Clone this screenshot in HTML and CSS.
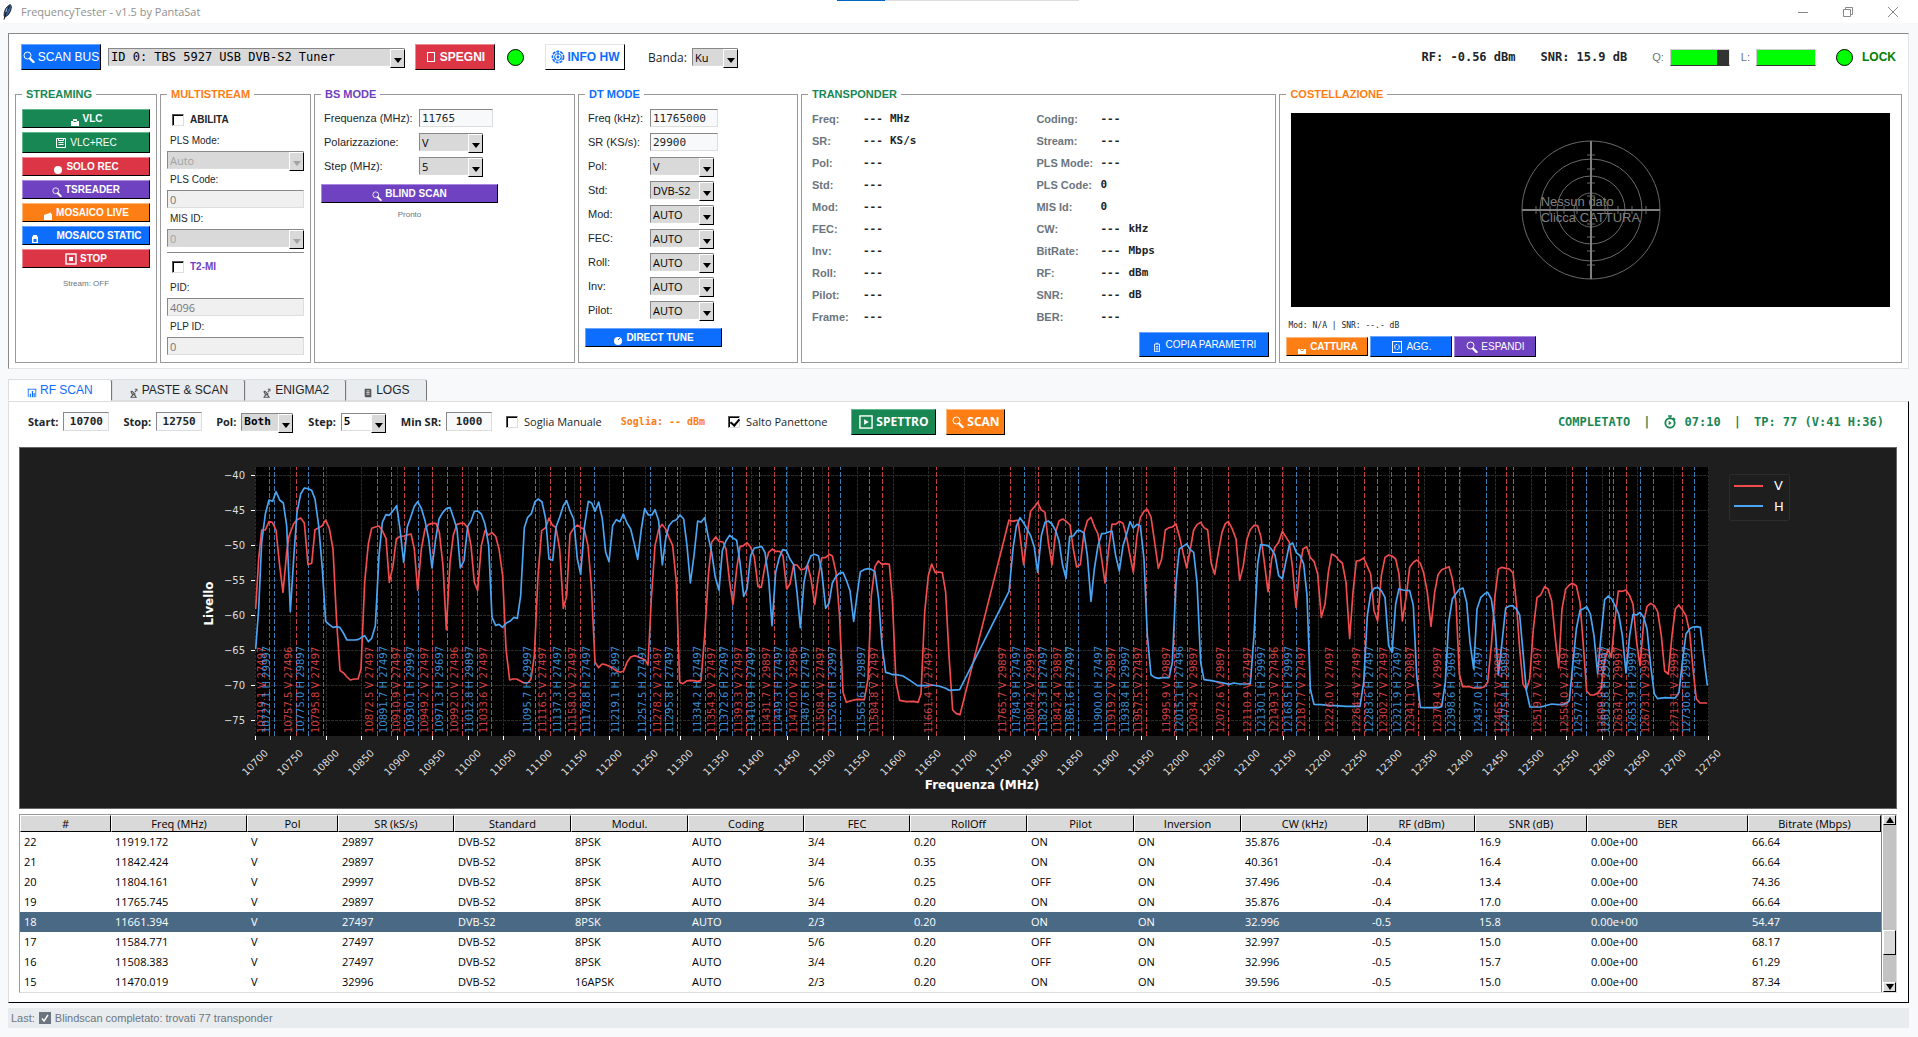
FILE: index.html
```html
<!DOCTYPE html>
<html lang="it">
<head>
    <meta charset="UTF-8">
    <title>FrequencyTester - v1.5 by PantaSat</title>
    <link rel="stylesheet" href="styles.css">
</head>
<body>
    <svg class="sprite" aria-hidden="true">
        <symbol id="i-search" viewBox="0 0 12 12">
            <circle cx="4.5" cy="4.5" r="3.5" fill="none" stroke="currentColor"/>
            <path d="M7 7.5l3.5 3.5" stroke="currentColor" stroke-width="2.4" stroke-linecap="round"/>
        </symbol>
        <symbol id="i-tofu" viewBox="0 0 12 12">
            <rect x="2.5" y="1.5" width="7" height="9" fill="none" stroke="currentColor"/>
        </symbol>
        <symbol id="i-chip" viewBox="0 0 14 14">
            <circle cx="7" cy="7" r="5.6" fill="none" stroke="currentColor" stroke-width="1.6" stroke-dasharray="3 1"/>
            <circle cx="7" cy="7" r="3.4" fill="none" stroke="currentColor"/>
            <path d="M7 2v3M2.5 9.5L5 8M11.5 9.5L9 8" stroke="currentColor"/>
            <circle cx="7" cy="7" r="1.4" fill="currentColor"/>
        </symbol>
        <symbol id="i-cast" viewBox="0 0 10 10">
            <path d="M3 3h4v2h2v5H1V5h2z" fill="currentColor"/>
            <path d="M3.5 5.5h3" stroke="#198754"/>
        </symbol>
        <symbol id="i-floppy" viewBox="0 0 12 12">
            <path d="M1.5 1.5h9v9h-9zM3.5 1.5v2h5v-2M3.5 5.5h5M3.5 7.5h5" fill="none" stroke="currentColor"/>
        </symbol>
        <symbol id="i-rec" viewBox="0 0 10 10"><circle cx="5" cy="6" r="4" fill="currentColor"/></symbol>
        <symbol id="i-clap" viewBox="0 0 10 10"><path d="M1 5l7-2.5V4h1v6H1z" fill="currentColor"/></symbol>
        <symbol id="i-cam" viewBox="0 0 10 10">
            <path d="M3 2h4v1.5h1V10H2V3.5h1z" fill="currentColor"/>
            <rect x="3.5" y="6" width="3" height="3" fill="#0d6efd"/>
        </symbol>
        <symbol id="i-stop" viewBox="0 0 12 12">
            <rect x="1" y="1" width="10" height="10" fill="none" stroke="currentColor" stroke-width="1.4"/>
            <rect x="4" y="4" width="4" height="4" fill="currentColor"/>
        </symbol>
        <symbol id="i-play" viewBox="0 0 15 15">
            <rect x="1" y="1" width="13" height="13" fill="none" stroke="currentColor" stroke-width="1.5"/>
            <path d="M5.5 4.5v6l5-3z" fill="currentColor"/>
        </symbol>
        <symbol id="i-tune" viewBox="0 0 10 10">
            <circle cx="5" cy="6" r="4" fill="currentColor"/>
            <path d="M5 5l2-2" stroke="#0d6efd"/>
        </symbol>
        <symbol id="i-doc" viewBox="0 0 10 12">
            <path d="M2 2.5h6v9H2zM3.5 1.5h3M3.5 5.5h3M3.5 7.5h3M3.5 9.5h3" fill="none" stroke="currentColor"/>
        </symbol>
        <symbol id="i-photo" viewBox="0 0 10 10">
            <path d="M1 5h8v5H1z" fill="currentColor"/><path d="M3 5.5q2 2.5 4 0" fill="none" stroke="#fd7e14"/>
        </symbol>
        <symbol id="i-refresh" viewBox="0 0 12 12">
            <rect x="1.5" y=".5" width="9" height="11" fill="none" stroke="currentColor"/>
            <path d="M5 8.5a3 3 0 0 1 0-5h1M7 3.5a3 3 0 0 1 0 5H6" fill="none" stroke="currentColor"/>
        </symbol>
        <symbol id="i-bars" viewBox="0 0 12 12">
            <path d="M1 1.5h10M1.5 1v10M10.5 1v10" stroke="currentColor"/>
            <path d="M4 11V7M6.5 11V3.5M8.5 11V6" stroke="currentColor" stroke-width="1.4"/>
        </symbol>
        <symbol id="i-dish" viewBox="0 0 12 12">
            <path d="M2.5 3.5q0 4.5 5 4.5M3 3.5l4.5 4M4.5 8l-2 3h6l-2-3" fill="none" stroke="currentColor" stroke-width="1.3"/>
            <path d="M7 5l1.5-2M7 1.5h2.500V4" fill="none" stroke="currentColor" stroke-width="1.3"/>
        </symbol>
        <symbol id="i-log" viewBox="0 0 12 12">
            <path d="M2 1h7l1 1v9H3l-1-1z" fill="currentColor"/>
            <path d="M4 3.5h4M4 5.5h4M4 7.5h4" stroke="#e9ecef"/>
        </symbol>
        <symbol id="i-timer" viewBox="0 0 15 15">
            <circle cx="7.5" cy="8.5" r="5" fill="none" stroke="currentColor" stroke-width="2"/>
            <path d="M5.5 1h4M7.5 1v2.5M11 3l2 2M6 7l2 1.5L6 10" fill="none" stroke="currentColor" stroke-width="1.5"/>
        </symbol>
        <symbol id="i-check" viewBox="0 0 12 12">
            <rect width="12" height="12" fill="currentColor"/>
            <path d="M3 6.5L5 9l4-6" fill="none" stroke="#fff" stroke-width="1.4"/>
        </symbol>
    </svg>

    <header class="titlebar">
        <svg class="feather" viewBox="0 0 10 16" aria-hidden="true">
            <path d="M2 11.5Q2 4 8 .5q2.5 1 .5 6.5Q7 11.5 3 13z" fill="#3c5f9c" stroke="#111" stroke-width=".8"/>
            <path d="M7.5 2Q4 7 2 15.5" fill="none" stroke="#111"/>
            <path d="M5 4.5L4 8" stroke="#9fc3f0"/>
        </svg>
        <span class="title">FrequencyTester - v1.5 by PantaSat</span>
        <span class="progress"></span>
        <div class="window-buttons">
            <button type="button" aria-label="Riduci"><svg viewBox="0 0 10 10"><path d="M0 5.5h10"/></svg></button>
            <button type="button" aria-label="Ripristina"><svg viewBox="0 0 10 10"><path d="M.5 2.5h7v7h-7zM2.5 2.5v-2h7v7h-2"/></svg></button>
            <button type="button" aria-label="Chiudi"><svg viewBox="0 0 10 10"><path d="M0 0l10 10M10 0L0 10"/></svg></button>
        </div>
    </header>

    <section class="tuner">
        <div class="device-bar">
            <button type="button" class="btn big blue"><svg class="ico"><use href="#i-search"/></svg>SCAN BUS</button>
            <span class="combo device"><select aria-label="Dispositivo"><option>ID 0: TBS 5927 USB DVB-S2 Tuner</option></select></span>
            <button type="button" class="btn big red bold"><svg class="ico"><use href="#i-tofu"/></svg>SPEGNI</button>
            <span class="led"></span>
            <button type="button" class="btn big white bold"><svg class="ico mid"><use href="#i-chip"/></svg>INFO HW</button>
            <label class="band" for="banda">Banda:</label>
            <span class="combo w46"><select id="banda"><option>Ku</option></select></span>
            <div class="signal">
                <span class="reading">RF: -0.56 dBm</span>
                <span class="reading">SNR: 15.9 dB</span>
                <span class="meter-label">Q:</span><span class="meter"><i style="width: 80%"></i></span>
                <span class="meter-label">L:</span><span class="meter"><i style="width: 100%"></i></span>
                <span class="led"></span>
                <span class="lock">LOCK</span>
            </div>
        </div>

        <div class="panels">
            <fieldset class="panel streaming">
                <legend class="c-green">STREAMING</legend>
                <button type="button" class="btn green bold"><svg class="ico low"><use href="#i-cast"/></svg>VLC</button>
                <button type="button" class="btn green tall"><svg class="ico"><use href="#i-floppy"/></svg>VLC+REC</button>
                <button type="button" class="btn red bold"><svg class="ico low"><use href="#i-rec"/></svg>SOLO REC</button>
                <button type="button" class="btn purple bold"><svg class="ico low"><use href="#i-search"/></svg>TSREADER</button>
                <button type="button" class="btn orange bold"><svg class="ico low"><use href="#i-clap"/></svg>MOSAICO LIVE</button>
                <button type="button" class="btn blue bold spaced"><svg class="ico low"><use href="#i-cam"/></svg>MOSAICO STATIC</button>
                <button type="button" class="btn red bold"><svg class="ico"><use href="#i-stop"/></svg>STOP</button>
                <p class="note">Stream: OFF</p>
            </fieldset>

            <fieldset class="panel multistream">
                <legend class="c-orange">MULTISTREAM</legend>
                <label class="check small"><input type="checkbox">ABILITA</label>
                <label class="field-label" for="pls-mode">PLS Mode:</label>
                <span class="combo off"><select id="pls-mode" disabled><option>Auto</option></select></span>
                <label class="field-label" for="pls-code">PLS Code:</label>
                <input class="entry" id="pls-code" type="text" value="0" disabled>
                <label class="field-label" for="mis-id">MIS ID:</label>
                <span class="combo off"><select id="mis-id" disabled><option>0</option></select></span>
                <hr>
                <label class="check small c-purple"><input type="checkbox">T2-MI</label>
                <label class="field-label" for="pid">PID:</label>
                <input class="entry" id="pid" type="text" value="4096" disabled>
                <label class="field-label" for="plp-id">PLP ID:</label>
                <input class="entry" id="plp-id" type="text" value="0" disabled>
            </fieldset>

            <fieldset class="panel bs">
                <legend class="c-purple">BS MODE</legend>
                <div class="form">
                    <label for="bs-freq">Frequenza (MHz):</label>
                    <input class="entry mono" id="bs-freq" type="text" value="11765">
                    <label for="bs-pol">Polarizzazione:</label>
                    <span class="combo w64"><select id="bs-pol"><option>V</option></select></span>
                    <label for="bs-step">Step (MHz):</label>
                    <span class="combo w64"><select id="bs-step"><option>5</option></select></span>
                </div>
                <button type="button" class="btn purple bold"><svg class="ico low"><use href="#i-search"/></svg>BLIND SCAN</button>
                <p class="note">Pronto</p>
            </fieldset>

            <fieldset class="panel dt">
                <legend class="c-blue">DT MODE</legend>
                <div class="form">
                    <label for="dt-freq">Freq (kHz):</label>
                    <input class="entry mono" id="dt-freq" type="text" value="11765000">
                    <label for="dt-sr">SR (KS/s):</label>
                    <input class="entry mono" id="dt-sr" type="text" value="29900">
                    <label for="dt-pol">Pol:</label>
                    <span class="combo w64"><select id="dt-pol"><option>V</option></select></span>
                    <label for="dt-std">Std:</label>
                    <span class="combo w64"><select id="dt-std"><option>DVB-S2</option></select></span>
                    <label for="dt-mod">Mod:</label>
                    <span class="combo w64"><select id="dt-mod"><option>AUTO</option></select></span>
                    <label for="dt-fec">FEC:</label>
                    <span class="combo w64"><select id="dt-fec"><option>AUTO</option></select></span>
                    <label for="dt-roll">Roll:</label>
                    <span class="combo w64"><select id="dt-roll"><option>AUTO</option></select></span>
                    <label for="dt-inv">Inv:</label>
                    <span class="combo w64"><select id="dt-inv"><option>AUTO</option></select></span>
                    <label for="dt-pilot">Pilot:</label>
                    <span class="combo w64"><select id="dt-pilot"><option>AUTO</option></select></span>
                </div>
                <button type="button" class="btn blue bold"><svg class="ico low"><use href="#i-tune"/></svg>DIRECT TUNE</button>
            </fieldset>

            <fieldset class="panel transponder">
                <legend class="c-green">TRANSPONDER</legend>
                <div class="params">
                    <dl class="left">
                        <dt>Freq:</dt><dd>---</dd><dd>MHz</dd>
                        <dt>SR:</dt><dd>---</dd><dd>KS/s</dd>
                        <dt>Pol:</dt><dd>---</dd><dd></dd>
                        <dt>Std:</dt><dd>---</dd><dd></dd>
                        <dt>Mod:</dt><dd>---</dd><dd></dd>
                        <dt>FEC:</dt><dd>---</dd><dd></dd>
                        <dt>Inv:</dt><dd>---</dd><dd></dd>
                        <dt>Roll:</dt><dd>---</dd><dd></dd>
                        <dt>Pilot:</dt><dd>---</dd><dd></dd>
                        <dt>Frame:</dt><dd>---</dd><dd></dd>
                    </dl>
                    <dl class="right">
                        <dt>Coding:</dt><dd>---</dd><dd></dd>
                        <dt>Stream:</dt><dd>---</dd><dd></dd>
                        <dt>PLS Mode:</dt><dd>---</dd><dd></dd>
                        <dt>PLS Code:</dt><dd>0</dd><dd></dd>
                        <dt>MIS Id:</dt><dd>0</dd><dd></dd>
                        <dt>CW:</dt><dd>---</dd><dd>kHz</dd>
                        <dt>BitRate:</dt><dd>---</dd><dd>Mbps</dd>
                        <dt>RF:</dt><dd>---</dd><dd>dBm</dd>
                        <dt>SNR:</dt><dd>---</dd><dd>dB</dd>
                        <dt>BER:</dt><dd>---</dd><dd></dd>
                    </dl>
                </div>
                <button type="button" class="btn blue copy"><svg class="ico low"><use href="#i-doc"/></svg>COPIA PARAMETRI</button>
            </fieldset>

            <fieldset class="panel constellation">
                <legend class="c-orange">COSTELLAZIONE</legend>
                <div class="scope">
                    <svg viewBox="0 0 140 140" aria-hidden="true">
                        <g fill="none" stroke="#6a6a6a">
                            <circle cx="70" cy="70" r="69"/>
                            <circle cx="70" cy="70" r="51"/>
                            <circle cx="70" cy="70" r="34"/>
                            <circle cx="70" cy="70" r="17"/>
                            <path d="M66 15h8M66 29h8M66 43h8M66 56h8M66 84h8M66 97h8M66 111h8M66 125h8"/>
                            <path d="M15 66v8M29 66v8M43 66v8M56 66v8M84 66v8M97 66v8M111 66v8M125 66v8"/>
                        </g>
                        <path d="M70 1v138M1 70h138" stroke="#808080" stroke-width="2"/>
                    </svg>
                    <p>Nessun dato<br>Clicca CATTURA</p>
                </div>
                <p class="mod">Mod: N/A | SNR: --.- dB</p>
                <div class="actions">
                    <button type="button" class="btn orange bold"><svg class="ico low"><use href="#i-photo"/></svg>CATTURA</button>
                    <button type="button" class="btn blue tall"><svg class="ico"><use href="#i-refresh"/></svg>AGG.</button>
                    <button type="button" class="btn purple tall"><svg class="ico"><use href="#i-search"/></svg>ESPANDI</button>
                </div>
            </fieldset>
        </div>
    </section>

    <nav class="tabs">
        <button type="button" class="tab active"><svg class="ico low"><use href="#i-bars"/></svg>RF SCAN</button>
        <button type="button" class="tab"><svg class="ico low"><use href="#i-dish"/></svg>PASTE &amp; SCAN</button>
        <button type="button" class="tab"><svg class="ico low"><use href="#i-dish"/></svg>ENIGMA2</button>
        <button type="button" class="tab"><svg class="ico low"><use href="#i-log"/></svg>LOGS</button>
    </nav>

    <main class="pane">
        <div class="scan-bar">
            <label for="start">Start:</label>
            <input class="entry mono" id="start" type="text" value="10700">
            <label for="stop">Stop:</label>
            <input class="entry mono" id="stop" type="text" value="12750">
            <label for="pol">Pol:</label>
            <span class="combo w52"><select id="pol"><option>Both</option></select></span>
            <label for="step">Step:</label>
            <span class="combo light w45"><select id="step"><option>5</option></select></span>
            <label for="min-sr">Min SR:</label>
            <input class="entry mono" id="min-sr" type="text" value="1000">
            <label class="check"><input type="checkbox">Soglia Manuale</label>
            <span class="threshold">Soglia: -- dBm</span>
            <label class="check skip"><input type="checkbox" checked>Salto Panettone</label>
            <button type="button" class="btn big green bold spectrum"><svg class="ico mid"><use href="#i-play"/></svg>SPETTRO</button>
            <button type="button" class="btn big orange bold scan"><svg class="ico"><use href="#i-search"/></svg>SCAN</button>
            <p class="status">
                <span>COMPLETATO</span><span>|</span>
                <span><svg class="ico mid"><use href="#i-timer"/></svg> 07:10</span><span>|</span>
                <span>TP: 77 (V:41 H:36)</span>
            </p>
        </div>

        <div class="figure">
            <svg id="chart" viewBox="0 0 1876 360" role="img" aria-label="Spettro"></svg>
        </div>

        <div class="results">
            <table>
                <thead>
                    <tr>
                        <th>#</th><th>Freq (MHz)</th><th>Pol</th><th>SR (kS/s)</th>
                        <th>Standard</th><th>Modul.</th><th>Coding</th><th>FEC</th>
                        <th>RollOff</th><th>Pilot</th><th>Inversion</th><th>CW (kHz)</th>
                        <th>RF (dBm)</th><th>SNR (dB)</th><th>BER</th><th>Bitrate (Mbps)</th>
                    </tr>
                </thead>
                <tbody id="rows"></tbody>
            </table>
            <div class="scrollbar">
                <button type="button" aria-label="Su"><svg viewBox="0 0 8 6"><path d="M4 0l4 6H0z"/></svg></button>
                <div class="track"><i class="thumb"></i></div>
                <button type="button" aria-label="Giù"><svg viewBox="0 0 8 6"><path d="M4 6l4-6H0z"/></svg></button>
            </div>
        </div>
    </main>

    <footer class="statusbar">Last: <svg class="ico"><use href="#i-check"/></svg> Blindscan completato: trovati 77 transponder</footer>

    <script src="script.js"></script>
</body>
</html>
```

FILE: styles.css
```css
* {
    box-sizing: border-box;
}

body {
    margin: 0;
    padding: 0 9px 0 8px;
    background: #f8f9fa;
    color: #212529;
    font-family: "Liberation Sans", Arial, sans-serif;
    font-size: 11px;
}

p, dl, dd {
    margin: 0;
}

button, input, select {
    font: inherit;
    color: inherit;
    border-radius: 0;
}

.sprite {
    position: absolute;
    width: 0;
    height: 0;
}

.ico {
    width: 12px;
    height: 12px;
    flex: none;
}

.ico.mid {
    width: 14px;
    height: 14px;
}

.ico.low {
    width: 10px;
    height: 10px;
    margin-top: 5px;
}

.c-green { color: #198754; }
.c-orange { color: #fd7e14; }
.c-purple { color: #6f42c1; }
.c-blue { color: #0d6efd; }

/* title bar */
.titlebar {
    display: flex;
    align-items: center;
    height: 23px;
    margin: 0 -9px 0 -8px;
    padding: 0 20px 0 2px;
    background: #fff;
    color: #8f8f8f;
    font-family: "Open Sans", sans-serif;
}

.feather {
    width: 10px;
    height: 16px;
    margin-right: 9px;
}

.progress {
    align-self: flex-start;
    width: 242px;
    height: 1px;
    margin: 0 auto 0 637px;
    background: linear-gradient(to right, #0067c0 48px, #ddd 48px);
}

.window-buttons {
    display: flex;
    gap: 35px;
}

.window-buttons button {
    width: 10px;
    height: 20px;
    padding: 0;
    border: 0;
    background: none;
}

.window-buttons svg {
    display: block;
    width: 10px;
    height: 10px;
    fill: none;
    stroke: #888;
}

/* raised buttons */
.btn {
    display: flex;
    align-items: center;
    justify-content: center;
    gap: 3px;
    height: 19px;
    padding: 0;
    border: 1px solid;
    color: #fff;
    font-size: 10px;
    white-space: nowrap;
}

.btn.tall {
    height: 21px;
}

.btn.big {
    width: 80px;
    height: 26px;
    font-size: 12px;
}

.btn.bold {
    font-weight: bold;
}

.blue { background: #0d6efd; border-color: #69a5ff #000 #000 #69a5ff; }
.green { background: #198754; border-color: #5fb78b #000 #000 #5fb78b; }
.red { background: #dc3545; border-color: #ef8a94 #000 #000 #ef8a94; }
.purple { background: #6f42c1; border-color: #a98ae0 #000 #000 #a98ae0; }
.orange { background: #fd7e14; border-color: #ffb577 #000 #000 #ffb577; }
.btn.white { background: #fff; border-color: #e3e3e3 #000 #000 #e3e3e3; color: #0d6efd; }

/* entries and combos */
.entry {
    display: block;
    height: 18px;
    padding: 0 2px;
    border: 1px solid;
    border-color: #888 #ddd #ddd #888;
    background: #f8f9fa;
    font-family: "Open Sans", sans-serif;
}

.entry:disabled {
    background: #f0f0f0;
    color: #777;
}

.entry.mono {
    font-family: "DejaVu Sans Mono", monospace;
}

.combo {
    position: relative;
    display: block;
    height: 18px;
}

.combo select {
    display: block;
    width: 100%;
    height: 100%;
    padding: 0 14px 0 2px;
    border: 1px solid;
    border-color: #888 #ddd #ddd #888;
    background: #d9d9d9;
    color: #000;
    font-family: "Open Sans", sans-serif;
    appearance: none;
    opacity: 1;
}

.combo::before {
    content: "";
    position: absolute;
    top: 1px;
    right: 0;
    width: 13px;
    height: 17px;
    border: 1px solid;
    border-color: #fff #000 #000 #fff;
    background: #d9d9d9;
    pointer-events: none;
}

.combo::after {
    content: "";
    position: absolute;
    right: 3px;
    bottom: 3px;
    border: 4px solid transparent;
    border-top: 5px solid #000;
    border-bottom: 0;
    pointer-events: none;
}

.combo.off select {
    color: #a3a3a3;
}

.combo.off::after {
    border-top-color: #a3a3a3;
}

.combo.light select {
    background: #fff;
}

.w64 { width: 64px; }
.w52 { width: 52px; }
.w46 { width: 46px; }
.w45 { width: 45px; }

.check {
    display: flex;
    align-items: center;
    gap: 6px;
}

.check input {
    width: 12px;
    height: 12px;
    margin: 0;
    border: 1px solid;
    border-color: #555 #ddd #ddd #555;
    box-shadow: inset 1px 1px #000;
    background: #fff;
    appearance: none;
}

.check input:checked::after {
    content: "";
    display: block;
    width: 4px;
    height: 7px;
    margin: 0 0 0 3px;
    border: solid #000;
    border-width: 0 2px 2px 0;
    transform: rotate(40deg);
}

/* tuner frame */
.tuner {
    margin-top: 10px;
    padding: 10px 6px 5px;
    border: 1px solid;
    border-color: #888 #e3e3e3 #e3e3e3 #888;
    background: #fff;
}

.device-bar {
    display: flex;
    align-items: center;
    height: 26px;
    padding: 0 6px;
}

.device {
    width: 297px;
    margin: 0 10px 0 7px;
}

.device select {
    font-family: "DejaVu Sans Mono", monospace;
    font-size: 12px;
}

.led {
    width: 17px;
    height: 17px;
    border: 1px solid #000;
    border-radius: 50%;
    background: #00ff00;
}

.device-bar > .led {
    margin: 0 21px 0 12px;
}

.band {
    margin: 0 5px 0 23px;
    font-family: "Open Sans", sans-serif;
    font-size: 12px;
}

.signal {
    display: flex;
    align-items: center;
    margin-left: auto;
}

.reading {
    margin-right: 25px;
    font-family: "DejaVu Sans Mono", monospace;
    font-size: 12px;
    font-weight: bold;
}

.meter-label {
    margin-right: 6px;
    color: #6c757d;
}

.meter {
    width: 60px;
    height: 17px;
    margin-right: 11px;
    border: 1px solid;
    border-color: #ccc #eee #333 #ccc;
    background: #333;
}

.meter i {
    display: block;
    height: 100%;
    background: #00ff00;
}

.signal .led {
    margin: 0 9px;
}

.lock {
    color: #008000;
    font-size: 12px;
    font-weight: bold;
}

/* panels */
.panels {
    display: grid;
    grid-template-columns: 142px 151px 261px 220px 475fr 622fr;
    gap: 3px;
    margin-top: 17px;
}

.panel {
    display: flex;
    flex-direction: column;
    min-width: 0;
    margin: 0;
    padding: 8px 6px 5px;
    border: 1px solid #999;
}

.panel legend {
    padding: 0 4px;
    font-weight: bold;
    line-height: 14px;
}

.streaming {
    gap: 4px;
}

.spaced {
    gap: 16px;
}

.note {
    padding-top: 6px;
    color: #6c757d;
    font-size: 8px;
    line-height: 12px;
    text-align: center;
}

.multistream .check {
    height: 21px;
    padding-left: 5px;
    font-size: 10px;
    font-weight: bold;
}

.field-label {
    padding-left: 3px;
    font-size: 10px;
    line-height: 21px;
}

.multistream .entry {
    width: 100%;
}

.multistream hr {
    width: 100%;
    height: 1px;
    margin: 5px 0 3px;
    border: 0;
    background: #888;
}

.form {
    display: grid;
    row-gap: 6px;
    justify-items: start;
    align-items: center;
    padding: 0 0 0 3px;
}

.form label {
    line-height: 18px;
}

.bs .form {
    grid-template-columns: 95px 1fr;
}

.bs .entry {
    width: 74px;
}

.bs .btn, .bs .note {
    width: 177px;
}

.bs .btn, .dt .btn {
    margin-top: 9px;
    flex: none;
}

.dt .form {
    grid-template-columns: 62px 1fr;
}

.dt .entry {
    width: 68px;
}

.dt .btn {
    width: 137px;
}

.params {
    display: flex;
    flex: 1;
    padding-left: 4px;
}

.params dl {
    display: grid;
    align-content: start;
    line-height: 20px;
    row-gap: 2px;
    font-weight: bold;
}

.params .left {
    flex: 1;
    grid-template-columns: 51px 27px 1fr;
}

.params .right {
    width: 233px;
    grid-template-columns: 64px 28px 1fr;
}

.params dt {
    color: #6c757d;
}

.params dd {
    height: 20px;
    font-family: "DejaVu Sans Mono", monospace;
}

.copy {
    align-self: flex-end;
    flex: none;
    width: 130px;
    height: 25px;
}

.scope {
    position: relative;
    height: 194px;
    margin: 4px 5px 0;
    background: #000;
}

.scope svg {
    display: block;
    width: 140px;
    height: 140px;
    margin: 27px auto;
}

.scope p {
    position: absolute;
    top: 50%;
    left: 50%;
    margin: -16px 0 0 -50px;
    color: #808080;
    font-size: 13px;
    line-height: 16px;
}

.mod {
    padding: 13px 2px 0;
    font-family: "DejaVu Sans Mono", monospace;
    font-size: 8px;
    line-height: 12px;
}

.actions {
    display: flex;
    align-items: center;
    gap: 2px;
    padding-top: 4px;
}

.actions .btn {
    width: 82px;
}

/* notebook */
.tabs {
    display: flex;
    height: 22px;
    margin-top: 10px;
}

.tab {
    display: flex;
    align-items: center;
    gap: 3px;
    padding: 0 16px;
    border: 1px solid;
    border-color: #ddd #777 #ddd #ddd;
    border-radius: 1px 3px 0 0;
    background: #e9ecef;
    font-size: 12px;
}

.tab.active {
    padding: 0 18px;
    border-bottom-color: #fff;
    background: #fff;
    color: #0d6efd;
}

.tab:not(.active) .ico {
    color: #555;
}

.pane {
    padding: 0 11px 9px 10px;
    border: 1px solid;
    border-color: #ddd #000 #000 #ddd;
    background: #fff;
}

.scan-bar {
    display: flex;
    align-items: center;
    height: 45px;
    padding: 0 13px 6px 9px;
    font-family: "Open Sans", sans-serif;
}

.scan-bar > label {
    margin-right: 5px;
    font-weight: bold;
    white-space: nowrap;
}

.scan-bar > .entry {
    width: 46px;
    height: 19px;
    margin-right: 14px;
    font-weight: bold;
    text-align: center;
}

.scan-bar > .combo {
    margin-right: 15px;
}

.scan-bar > .combo select {
    font-family: "DejaVu Sans Mono", monospace;
    font-weight: bold;
}

.scan-bar > .check {
    margin-right: 19px;
    font-weight: normal;
}

.threshold {
    margin-right: 23px;
    color: #fd7e14;
    font-family: "DejaVu Sans Mono", monospace;
    font-size: 10px;
    font-weight: bold;
}

.scan-bar > .skip {
    margin-right: 24px;
}

.btn.spectrum {
    width: 85px;
}

.btn.scan {
    width: 59px;
    margin-left: 10px;
}

.status {
    display: flex;
    gap: 13px;
    margin-left: auto;
    color: #198754;
    font-family: "DejaVu Sans Mono", monospace;
    font-size: 12px;
    font-weight: bold;
}

.status .ico {
    vertical-align: -3px;
}

.figure {
    border: 1px solid #666;
    background: #1e1e1e;
}

/* chart */
#chart {
    display: block;
    width: 100%;
    font-family: "DejaVu Sans", sans-serif;
    font-size: 10px;
    fill: #fff;
}

#chart .plot { fill: #000; }
#chart .grid { stroke: #2b2b27; stroke-dasharray: 3 1; }
#chart .tick { stroke: #fff; }
#chart .axis { font-weight: bold; font-size: 12px; text-anchor: middle; }
#chart .xlabel { text-anchor: middle; fill: #ddd; }
#chart .ylabel { text-anchor: end; fill: #ddd; }
#chart .key { font-size: 13px; }
#chart .marker { stroke-dasharray: 5 2; opacity: .85; }
#chart .marker.V { stroke: #e24a4c; }
#chart .marker.H { stroke: #3f93d6; }
#chart .tag { opacity: .85; }
#chart .tag.V { fill: #ef4b4e; }
#chart .tag.H { fill: #4aa3f2; }
#chart .trace { fill: none; stroke-width: 5; stroke-linejoin: round; }
#chart .line { stroke-width: 2; }
#chart .trace.V, #chart .line.V { stroke: #f24c4f; }
#chart .trace.H, #chart .line.H { stroke: #4aa6f5; }

/* results */
.results {
    display: flex;
    margin-top: 5px;
    border: 1px solid;
    border-color: #999 #ddd #ddd #999;
}

table {
    flex: 1;
    table-layout: fixed;
    border-collapse: separate;
    border-spacing: 0;
    color: #000;
    font-family: "Open Sans", sans-serif;
}

th, td {
    padding: 0 4px;
    text-align: left;
    white-space: nowrap;
}

th {
    height: 17px;
    border: 1px solid;
    border-color: #fff #000 #000 #fff;
    background: #d9d9d9;
    font-weight: normal;
    line-height: 15px;
    text-align: center;
}

td {
    height: 20px;
    line-height: 20px;
}

th:nth-child(1), th:nth-child(3) { width: 91px; }
th:nth-child(2) { width: 136px; }
th:nth-child(4), th:nth-child(7) { width: 116px; }
th:nth-child(5), th:nth-child(6), th:nth-child(9) { width: 117px; }
th:nth-child(8) { width: 106px; }
th:nth-child(10), th:nth-child(11), th:nth-child(13) { width: 107px; }
th:nth-child(12) { width: 127px; }
th:nth-child(14) { width: 112px; }
th:nth-child(15) { width: 161px; }
th:nth-child(16) { width: 133px; }

tr.selected {
    background: #4a6984;
    color: #fff;
}

.scrollbar {
    display: flex;
    flex-direction: column;
    width: 15px;
    padding-left: 1px;
    border-left: 1px solid #888;
}

.scrollbar button {
    display: flex;
    align-items: center;
    justify-content: center;
    height: 10px;
    padding: 0;
    border: 1px solid;
    border-color: #fff #000 #000 #fff;
    background: #d9d9d9;
}

.scrollbar svg {
    width: 8px;
    height: 6px;
}

.track {
    flex: 1;
    display: flex;
    flex-direction: column;
    padding-top: 105px;
    background: #c3c3c3;
}

.thumb {
    height: 25px;
    border: 1px solid;
    border-color: #fff #000 #000 #fff;
    background: #d9d9d9;
}

/* status bar */
.statusbar {
    display: flex;
    align-items: center;
    gap: 4px;
    height: 20px;
    margin-top: 5px;
    padding: 0 3px;
    background: #e9ecef;
    color: #6c757d;
}
```

FILE: script.js
```js
// plot area inside the figure
const PLOT = { x: 235, y: 19, w: 1454, h: 269 };
const F_MIN = 10700, F_MAX = 12750;

const fx = f => PLOT.x + (f - F_MIN) * (PLOT.w - 1) / (F_MAX - F_MIN);
const ly = db => 27 + (-40 - db) * 7;

const transponders = [
    '10719.1 V 27497', '10727.1 H 29997', '10757.5 V 27496', '10775.0 H 29897', '10795.8 V 27497',
    '10872.5 V 27497', '10891.7 H 27497', '10910.9 V 27497', '10930.1 H 29997', '10949.2 V 27497',
    '10971.3 H 29697', '10992.0 V 27496', '11012.8 H 29897', '11033.6 V 27497', '11095.7 H 29997',
    '11116.5 V 27497', '11137.3 H 27497', '11158.0 V 27497', '11178.8 H 27497', '11219.1 H 32997',
    '11257.5 H 27497', '11278.2 V 27497', '11295.8 H 27497', '11334.2 H 27497', '11354.9 V 27497',
    '11372.6 H 27497', '11393.3 V 27497', '11410.9 H 27497', '11431.7 V 29897', '11449.3 H 27497',
    '11470.0 V 32996', '11487.6 H 27497', '11508.4 V 27497', '11526.0 H 32997', '11565.6 H 29897',
    '11584.8 V 27497', '11661.4 V 27497', '11765.7 V 29897', '11784.9 H 27497', '11804.2 V 29997',
    '11823.3 H 27497', '11842.4 V 29897', '11861.6 H 27497', '11900.0 H 27497', '11919.2 V 29897',
    '11938.4 H 29997', '11957.5 V 27497', '11995.9 V 29897', '12015.1 H 27496', '12034.2 V 29897',
    '12072.6 V 29897', '12110.9 V 27497', '12130.1 H 29997', '12149.3 V 27496', '12168.5 H 29997',
    '12187.7 V 27497', '12226.0 V 27497', '12264.4 V 27497', '12283.6 H 27497', '12302.7 V 27497',
    '12321.9 H 27497', '12341.1 V 29897', '12379.4 V 29997', '12398.6 H 29697', '12437.0 H 27497',
    '12465.7 V 29997', '12475.4 H 29897', '12519.7 V 27497', '12558.0 V 27497', '12577.2 H 27497',
    '12609.9 V 29997', '12615.6 H 29997', '12634.7 V 29997', '12653.9 H 29997', '12673.1 V 29997',
    '12713.1 V 29997', '12730.6 H 29997'
];

// sampled levels, three units per pixel
const traceV = `48,480 57,330 66,243 77,243 88,218 98,220 109,243 120,350 130,430 141,310 148,262 162,224 172,212
183,207 194,222 205,347 216,343 226,242 237,236 248,230 258,213 269,238 280,300 291,520 301,665 312,672 322,684
332,693 344,690 355,690 364,660 375,400 386,285 396,238 407,234 418,231 428,245 439,268 449,400 460,350 470,270
481,262 492,261 503,258 514,255 524,300 534,424 545,300 556,240 567,226 578,223 589,223 599,250 610,350 620,542
631,340 641,258 652,226 662,223 673,223 684,236 694,290 704,400 714,424 725,290 736,245 746,258 757,251 768,262
778,300 789,380 799,600 810,693 820,690 831,690 842,696 853,702 864,702 874,690 884,620 895,380 906,245 918,236
928,207 938,228 949,236 960,300 971,478 981,440 991,255 1002,238 1013,228 1024,236 1034,241 1045,290 1055,410
1066,640 1077,656 1087,645 1098,647 1109,652 1120,658 1131,666 1142,670 1152,666 1162,640 1173,624 1184,620
1194,623 1205,628 1216,632 1225,648 1235,450 1246,290 1257,242 1267,226 1278,240 1288,265 1299,290 1310,400
1320,700 1330,704 1341,696 1352,694 1363,695 1374,697 1384,694 1395,560 1406,380 1416,280 1428,264 1438,277
1450,279 1459,300 1470,400 1480,466 1491,360 1501,293 1511,290 1522,281 1533,294 1544,325 1555,412 1565,415
1576,350 1587,310 1598,300 1608,307 1620,307 1630,320 1641,420 1651,405 1662,347 1672,348 1683,362 1694,360
1704,348 1714,390 1725,466 1735,390 1746,327 1758,325 1769,316 1778,321 1789,370 1799,490 1810,730 1820,760
1831,756 1852,751 1874,752 1885,690 1895,440 1906,352 1916,336 1927,346 1938,344 1949,346 1958,450 1969,700
1980,754 2000,758 2022,757 2035,760 2044,735 2055,490 2066,380 2076,345 2087,371 2098,369 2108,371 2118,430
2128,620 2139,783 2150,794 2161,797 2308,213 2319,217 2330,214 2335,214 2341,260 2352,348 2363,250 2373,186
2384,174 2394,160 2404,182 2416,190 2426,280 2437,348 2448,250 2458,216 2469,210 2480,217 2491,228 2501,300
2511,354 2522,347 2533,250 2543,215 2554,205 2564,232 2575,255 2586,330 2596,402 2607,300 2617,225 2628,226
2639,217 2650,223 2660,260 2671,320 2681,370 2692,260 2702,205 2713,187 2723,181 2734,204 2745,280 2756,358
2766,330 2777,243 2788,236 2798,234 2809,225 2820,265 2830,310 2841,357 2852,300 2862,243 2872,227 2883,220
2893,236 2904,243 2915,345 2925,376 2936,310 2947,250 2957,224 2966,217 2977,238 2989,270 3000,394 3011,350
3022,270 3032,242 3043,229 3054,230 3064,265 3074,340 3085,428 3096,330 3106,295 3117,280 3128,247 3138,263
3149,280 3159,360 3169,475 3180,360 3190,300 3201,293 3212,326 3223,337 3234,375 3245,505 3256,465 3266,370
3276,315 3287,321 3298,334 3308,342 3319,400 3330,568 3340,430 3350,336 3361,334 3372,327 3383,352 3393,375
3403,485 3414,516 3425,380 3436,325 3447,318 3457,321 3468,330 3478,375 3488,516 3500,440 3510,355 3520,341
3531,333 3542,343 3552,372 3563,430 3574,532 3585,430 3595,377 3606,362 3617,358 3628,353 3638,390 3649,460
3659,676 3669,713 3680,713 3690,713 3702,717 3712,717 3723,717 3734,713 3744,700 3755,590 3766,440 3776,360
3787,355 3798,358 3809,360 3820,372 3830,460 3840,600 3850,705 3860,722 3870,690 3881,540 3892,446 3903,438
3915,413 3925,420 3936,455 3946,560 3957,657 3967,480 3978,420 3989,408 3998,403 4010,410 4021,460 4031,590
4041,726 4052,738 4063,738 4074,732 4084,720 4094,640 4105,600 4115,625 4126,510 4136,426 4148,427 4159,423
4170,440 4180,466 4191,580 4201,650 4212,520 4222,472 4233,463 4244,470 4254,488 4265,560 4275,666 4286,675
4297,560 4307,480 4317,468 4328,482 4339,500 4350,550 4360,660 4370,750 4381,762 4403,762`;

const traceH = `48,600 57,480 66,280 77,195 88,153 99,157 109,128 120,153 131,162 141,230 152,488 162,330 172,190
183,135 194,117 205,119 216,124 226,150 237,230 248,360 258,517 269,527 280,535 291,533 301,536 311,552 322,573
333,573 344,573 355,572 366,565 375,560 386,578 396,568 407,530 418,320 428,220 439,197 449,199 460,185 471,170
481,240 492,340 503,233 513,205 524,172 534,158 545,178 556,215 567,270 577,357 588,270 598,210 609,191 620,179
631,176 641,205 652,240 662,357 673,335 684,232 694,216 704,187 714,186 725,195 736,225 747,290 757,505 768,529
778,526 789,535 800,522 812,516 823,505 833,508 843,440 854,236 864,205 875,194 886,158 896,150 907,159 918,210
928,330 939,334 949,235 960,205 971,170 981,155 991,185 1002,210 1013,330 1023,376 1034,235 1046,157 1056,162
1066,187 1077,159 1088,210 1098,310 1108,338 1119,230 1130,212 1141,218 1151,195 1162,222 1173,240 1184,285
1194,331 1205,240 1215,179 1226,198 1237,198 1246,182 1257,215 1268,348 1278,270 1288,230 1299,217 1310,212
1321,198 1332,210 1342,290 1352,402 1363,320 1374,216 1384,220 1395,206 1406,265 1416,310 1427,385 1438,424
1448,305 1459,275 1470,259 1481,268 1491,274 1501,340 1512,442 1522,420 1533,320 1544,297 1555,295 1566,292
1576,311 1587,390 1597,530 1608,370 1619,325 1629,302 1640,305 1651,330 1662,347 1672,430 1682,536 1693,400
1704,345 1714,320 1725,316 1736,320 1746,365 1758,478 1768,463 1778,402 1789,382 1799,373 1810,370 1821,396
1831,425 1842,517 1852,440 1862,368 1873,362 1885,359 1895,361 1906,368 1917,450 1927,590 1938,670 1949,673
1959,677 1970,677 1990,681 2012,695 2033,710 2055,710 2076,708 2097,711 2118,718 2128,724 2160,722 2308,427
2320,300 2330,232 2341,206 2352,222 2363,242 2373,260 2384,295 2394,370 2405,260 2416,220 2426,216 2437,225
2448,245 2458,275 2468,345 2479,388 2490,262 2501,261 2512,245 2522,245 2533,252 2543,320 2554,457 2564,360
2575,290 2586,254 2597,253 2607,249 2617,246 2628,320 2639,366 2650,290 2660,258 2671,218 2681,237 2692,226
2702,231 2713,330 2723,560 2734,678 2745,685 2756,688 2767,686 2788,686 2798,640 2809,400 2819,300 2830,292
2841,285 2851,301 2862,310 2872,400 2883,640 2893,692 2915,695 2936,699 2957,703 2968,706 2983,702 3000,705
3022,705 3032,703 3043,560 3054,345 3063,287 3085,290 3096,302 3106,318 3117,380 3128,390 3138,340 3149,288
3159,282 3170,311 3181,320 3192,345 3202,440 3212,720 3223,766 3245,767 3266,769 3287,770 3319,772 3361,772
3372,700 3383,500 3393,435 3403,418 3414,415 3425,425 3436,445 3447,590 3457,610 3468,465 3478,419 3489,423
3510,425 3521,470 3531,680 3542,775 3563,776 3595,776 3606,773 3617,700 3627,520 3638,450 3648,435 3658,422
3670,417 3681,460 3691,580 3702,660 3712,480 3723,446 3734,435 3744,430 3755,450 3766,530 3776,678 3787,580
3798,477 3809,471 3818,470 3830,480 3840,498 3851,620 3860,725 3871,774 3903,774 3914,771 3936,765 3955,767
3968,766 3980,764 3989,755 3999,650 4010,540 4021,484 4031,479 4041,473 4052,495 4063,560 4074,675 4084,560
4095,452 4106,441 4116,450 4126,470 4137,495 4148,560 4159,672 4170,560 4180,496 4191,498 4201,490 4212,505
4222,540 4233,650 4244,735 4254,749 4276,746 4307,747 4318,730 4328,640 4339,555 4350,539 4360,534 4371,533
4382,535 4392,620 4403,710`;

function drawChart() {
    const out = [];
    const { x, y, w, h } = PLOT;
    const bottom = y + h;
    out.push(`<rect class="plot" x="${x}" y="${y}" width="${w}" height="${h}"/>`);

    for (let f = F_MIN; f <= F_MAX; f += 50) {
        const px = Math.round(fx(f)) + 0.5;
        out.push(`<path class="grid" d="M${px} ${y}v${h}"/>`);
        out.push(`<path class="tick" d="M${px} ${bottom}v4"/>`);
        out.push(`<text class="xlabel" transform="translate(${px + 2} ${bottom + 29}) rotate(-45)">${f}</text>`);
    }
    for (let db = -40; db >= -75; db -= 5) {
        const py = ly(db) + 0.5;
        out.push(`<path class="grid" d="M${x} ${py}h${w}"/>`);
        out.push(`<path class="tick" d="M${x - 4} ${py}h4"/>`);
        out.push(`<text class="ylabel" x="${x - 10}" y="${ly(db) + 4}">−${-db}</text>`);
    }

    transponders.forEach(t => {
        const [freq, pol] = t.split(' ');
        const px = Math.round(fx(Number(freq))) + 0.5;
        out.push(`<path class="marker ${pol}" d="M${px} ${bottom}V${y}"/>`);
    });

    out.push(`<svg x="${x}" y="${y}" width="${w}" height="${h}" viewBox="46 54 ${w * 3} ${h * 3}">
        <polyline class="trace V" points="${traceV}"/>
        <polyline class="trace H" points="${traceH}"/>
    </svg>`);

    transponders.forEach(t => {
        const [freq, pol] = t.split(' ');
        const px = Math.round(fx(Number(freq)));
        out.push(`<text class="tag ${pol}" transform="translate(${px - 4} ${bottom - 3}) rotate(-90)">${t}</text>`);
    });

    out.push(`<text class="axis" x="${x + w / 2}" y="${bottom + 53}">Frequenza (MHz)</text>`);
    out.push(`<text class="axis" transform="translate(193 ${y + h / 2 + 2}) rotate(-90)">Livello</text>`);

    out.push('<rect x="1709.5" y="26.5" width="60" height="46" rx="2" fill="none" stroke="#2d2d2d"/>');
    out.push('<path class="line V" d="M1714 38h29"/><text class="key" x="1754" y="42">V</text>');
    out.push('<path class="line H" d="M1714 58h29"/><text class="key" x="1754" y="63">H</text>');

    document.getElementById('chart').innerHTML = out.join('');
}

const rows = [
    [22, '11919.172', 'V', 29897, 'DVB-S2', '8PSK', 'AUTO', '3/4', '0.20', 'ON', 'ON', '35.876', '-0.4', '16.9', '0.00e+00', '66.64'],
    [21, '11842.424', 'V', 29897, 'DVB-S2', '8PSK', 'AUTO', '3/4', '0.35', 'ON', 'ON', '40.361', '-0.4', '16.4', '0.00e+00', '66.64'],
    [20, '11804.161', 'V', 29997, 'DVB-S2', '8PSK', 'AUTO', '5/6', '0.25', 'OFF', 'ON', '37.496', '-0.4', '13.4', '0.00e+00', '74.36'],
    [19, '11765.745', 'V', 29897, 'DVB-S2', '8PSK', 'AUTO', '3/4', '0.20', 'ON', 'ON', '35.876', '-0.4', '17.0', '0.00e+00', '66.64'],
    [18, '11661.394', 'V', 27497, 'DVB-S2', '8PSK', 'AUTO', '2/3', '0.20', 'ON', 'ON', '32.996', '-0.5', '15.8', '0.00e+00', '54.47'],
    [17, '11584.771', 'V', 27497, 'DVB-S2', '8PSK', 'AUTO', '5/6', '0.20', 'OFF', 'ON', '32.997', '-0.5', '15.0', '0.00e+00', '68.17'],
    [16, '11508.383', 'V', 27497, 'DVB-S2', '8PSK', 'AUTO', '3/4', '0.20', 'OFF', 'ON', '32.996', '-0.5', '15.7', '0.00e+00', '61.29'],
    [15, '11470.019', 'V', 32996, 'DVB-S2', '16APSK', 'AUTO', '2/3', '0.20', 'ON', 'ON', '39.596', '-0.5', '15.0', '0.00e+00', '87.34']
];
const selected = 18;

function fillTable() {
    document.getElementById('rows').innerHTML = rows.map(row => {
        const cls = row[0] === selected ? ' class="selected"' : '';
        return `<tr${cls}>${row.map(v => `<td>${v}</td>`).join('')}</tr>`;
    }).join('');
}

drawChart();
fillTable();
```
